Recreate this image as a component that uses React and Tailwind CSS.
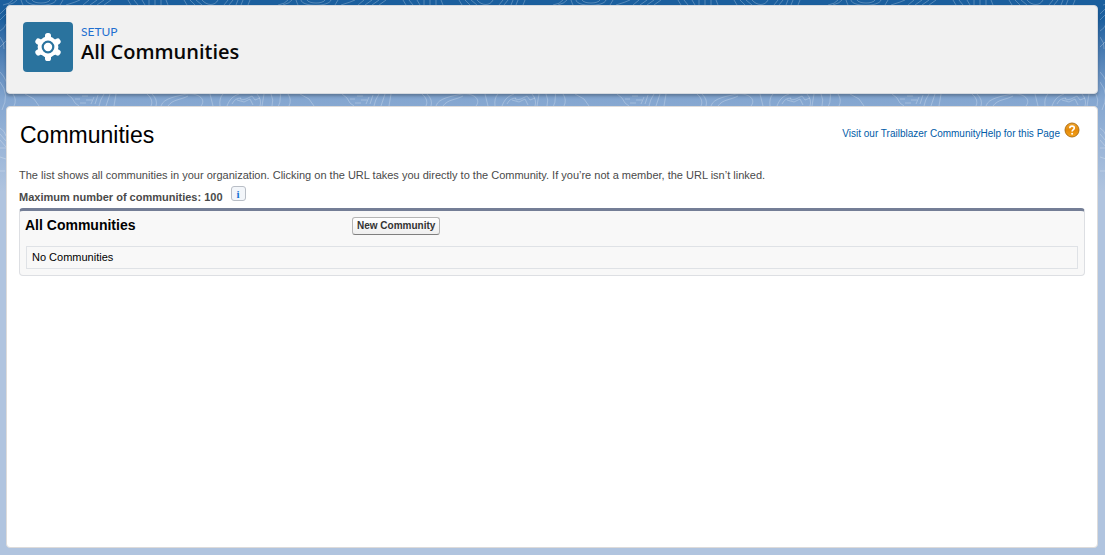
import React from "react";

function Backdrop() {
  return (
    <svg className="absolute inset-x-0 top-0 h-48 w-full" aria-hidden="true">
      <defs>
        <pattern id="contours" width="275" height="192" patternUnits="userSpaceOnUse">
          <g fill="none" stroke="#ffffff" strokeOpacity="0.25" strokeWidth="1">
            {/* top edge */}
            <path d="M3 5Q10 4 13 0M8 5Q15 3 17 0M26 0C27 7 54 7 56 0M32 0C34 4 48 4 50 0M21 0Q22 3 23 5M60 5L63 0M66 5Q76 2 80 0M83 5L89 0M90 5L97 0M97 5L104 0M104 5L111 0" />
            <path d="M128 0L131 5M134 0L138 5M142 0L145 5M149 0V5M155 0V5M161 0V5M166 0L168 5M184 0L187 5M190 0L195 5M196 0L202 5M202 0C207 6 215 6 218 0M228 0L224 5M233 0L229 5M238 0L236 5M243 0L241 5M250 0L248 5" />
            {/* band under the header */}
            <path d="M13 94Q17 100 14 106M25 94L34 99L39 106M104 94Q100 100 99 106M110 94L106 106M116 94L114 106M147 94Q154 100 151 106M152 94Q158 100 156 106" />
            <path d="M161 106C163 98 178 96 187 94C200 93 206 100 201 106M168 106C173 99 181 100 188 96M210 94L213 106M220 106Q219 98 223 94M227 106C230 98 234 96 239 94M257 94Q262 100 260 106M264 94L262 106M271 94Q274 100 272 106" />
            <path d="M232 104Q235 98 241 98Q239 101 246 99L252 96L255 100L260 98M237 100L244 102L250 99L253 105" />
            <path d="M67 94L72 98L75 103L79 106M75 99H80M82 96H88M86 100H92M94 97L91 104M80 103H86M98 95L95 104" />
            {/* window margin */}
            <path d="M0 14L6 8M0 20L6 14M0 31Q5 28 6 24M0 37Q5 43 4 49M0 47L6 41M0 82Q10 94 2 110M0 72Q8 80 8 92M0 128Q5 131 6 136M0 134L6 141M0 140L6 147M0 148H6M0 157L6 159M0 171H5" />
          </g>
        </pattern>
      </defs>
      <rect width="100%" height="100%" fill="url(#contours)" />
    </svg>
  );
}

function GearIcon() {
  return (
    <svg viewBox="0 0 28 28" className="h-7 w-7" aria-hidden="true">
      <g fill="#ffffff">
        <circle cx="14" cy="14" r="10.4" />
        <rect x="11" y="0" width="6" height="28" rx="2.6" />
        <rect x="11" y="0" width="6" height="28" rx="2.6" transform="rotate(60 14 14)" />
        <rect x="11" y="0" width="6" height="28" rx="2.6" transform="rotate(120 14 14)" />
      </g>
      <circle cx="14" cy="14" r="5.3" fill="#ffffff" stroke="#2a739e" strokeWidth="2.2" />
    </svg>
  );
}

function HelpIcon() {
  return (
    <svg viewBox="0 0 16 16" className="mb-1 h-4 w-4" aria-hidden="true">
      <defs>
        <linearGradient id="orange" x1="0" y1="0" x2="0" y2="1">
          <stop offset="0" stopColor="#f0a630" />
          <stop offset="0.5" stopColor="#e58a08" />
          <stop offset="1" stopColor="#f5a31c" />
        </linearGradient>
      </defs>
      <circle cx="8" cy="8" r="7" fill="url(#orange)" stroke="#a8690f" strokeWidth="0.9" />
      <path d="M5.8 6.2C5.8 3.4 10.3 3.5 10.3 6.1C10.3 7.7 8.1 7.7 8.1 9.6" fill="none" stroke="#ffffff" strokeWidth="1.6" />
      <circle cx="8.1" cy="11.8" r="1" fill="#ffffff" />
    </svg>
  );
}

function PageHeader() {
  return (
    <header className="flex h-[89px] items-start gap-2 rounded border border-[#d5d9df] bg-[#f1f1f1] p-4 shadow-[0_2px_3px_rgba(0,0,0,0.25)]">
      <div className="flex h-[50px] w-[50px] items-center justify-center rounded bg-[#2a739e]">
        <GearIcon />
      </div>
      <div>
        <p className="pt-0.5 font-['Lato',sans-serif] text-[12px] leading-4 text-[#1f6fd0]">SETUP</p>
        <h1 className="font-['Open_Sans',sans-serif] text-[20px] leading-6 font-semibold text-[#080707]">
          All Communities
        </h1>
      </div>
    </header>
  );
}

function CommunityList() {
  return (
    <section className="rounded border border-t-[3px] border-[#dddfe3] border-t-[#747e96] bg-[#f8f8f8] px-1.5 pb-1.5">
      <div className="-ml-px flex h-[35px] items-start pt-1.5">
        <h3 className="w-[327px] text-[14px] leading-4 font-bold text-black">All Communities</h3>
        <button
          type="button"
          className="h-[18px] rounded-[3px] border border-[#b5b5b5] border-b-[#7f7f7f] bg-linear-to-b from-white to-[#efefef] px-1 text-[10px] leading-4 font-bold text-[#333333]"
        >
          New Community
        </button>
      </div>
      <table className="w-full border border-[#dfe2e6] text-left text-[11px] leading-[21px] text-black">
        <tbody>
          <tr>
            <td className="px-[5px]">No Communities</td>
          </tr>
        </tbody>
      </table>
    </section>
  );
}

function App() {
  return (
    <div className="relative min-h-screen bg-[#b0c4df] font-['Liberation_Sans',Arial,sans-serif]">
      <div className="absolute inset-x-0 top-0 h-48 bg-linear-to-b from-[#1b5f9e] from-10% via-[#84a6d0] via-52% to-[#b0c4df] to-100%" />
      <Backdrop />
      <div className="relative flex min-h-screen flex-col gap-3 pt-[5px] pr-[7px] pb-[7px] pl-1.5">
        <PageHeader />
        <main className="flex-1 rounded border border-[#dddbda] bg-white px-3 pt-3">
          <div className="flex items-start justify-between">
            <h2 className="pt-0.5 pl-px text-[23px] leading-7 text-black">Communities</h2>
            <div className="flex items-center pt-[3px] pr-[5px] text-[10px] leading-4 text-[#015ba7]">
              <a href="#community" className="pt-1">Visit our Trailblazer Community</a>
              <a href="#help" className="flex items-center gap-1">
                <span className="pt-1">Help for this Page</span>
                <HelpIcon />
              </a>
            </div>
          </div>
          <p className="pt-[18px] text-[11px] leading-4 text-[#4a4a4a]">
            The list shows all communities in your organization. Clicking on the URL takes you directly to the
            Community. If you’re not a member, the URL isn’t linked.
          </p>
          <div className="flex h-[25px] items-center gap-2 pt-0.5 text-[11px] leading-4 font-bold text-[#4a4a4a]">
            <span>Maximum number of communities: 100</span>
            <button
              type="button"
              aria-label="Info"
              className="mb-1.5 h-[15px] w-[15px] rounded-[3px] border border-[#b9bec6] bg-[#f3f6fa] font-['Liberation_Serif',serif] text-[11px] leading-3 font-bold text-[#1573d6]"
            >
              i
            </button>
          </div>
          <CommunityList />
        </main>
      </div>
    </div>
  );
}

export default App;
